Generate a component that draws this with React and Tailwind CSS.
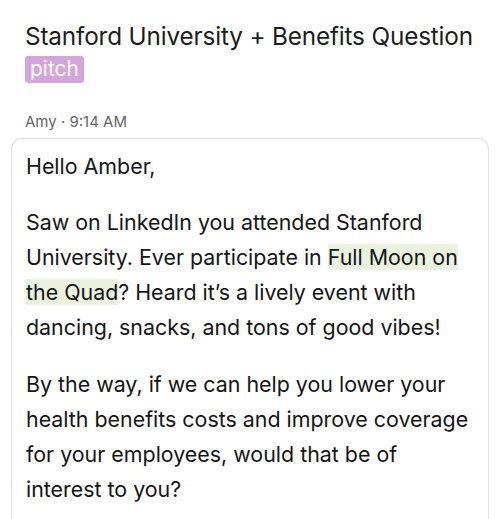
export default function App() {
  return (
    <div
      className="w-[500px] h-[519px] overflow-hidden bg-white text-[#1c1c1e]"
      style={{ fontFamily: "Inter, 'Liberation Sans', sans-serif" }}
    >
      {/* header */}
      <div className="pl-[25px] pt-[20px]">
        <h1 className="text-[24.3px] leading-[32px] tracking-[-0.15px] font-normal whitespace-nowrap">
          Stanford University + Benefits Question
        </h1>
        <span className="inline-block mt-[4px] h-[27px] px-[5px] rounded-[3px] bg-[#d4a5dc] text-white text-[21px] leading-[26px]">
          pitch
        </span>
        <div className="mt-[30px] text-[15px] leading-[18px] text-[#666666]">
          Amy · 9:14 AM
        </div>
      </div>

      {/* message card */}
      <div className="mt-[7px] mx-[11px] h-[400px] border border-b-0 border-[#dedede] rounded-t-[11px] px-[14px] pt-[10px] text-[21.4px] leading-[35px] text-[#151515]">
        <p className="whitespace-nowrap">Hello Amber,</p>
        <p className="mt-[21px] whitespace-nowrap">
          Saw on LinkedIn you attended Stanford
          <br />
          University. Ever participate in{" "}
          <span className="bg-[#e8f2df]">Full Moon on</span>
          <br />
          <span className="bg-[#e8f2df]">the Quad</span>? Heard it’s a lively event with
          <br />
          dancing, snacks, and tons of good vibes!
        </p>
        <p className="mt-[22px] whitespace-nowrap">
          By the way, if we can help you lower your
          <br />
          health benefits costs and improve coverage
          <br />
          for your employees, would that be of
          <br />
          interest to you?
        </p>
      </div>
    </div>
  );
}
